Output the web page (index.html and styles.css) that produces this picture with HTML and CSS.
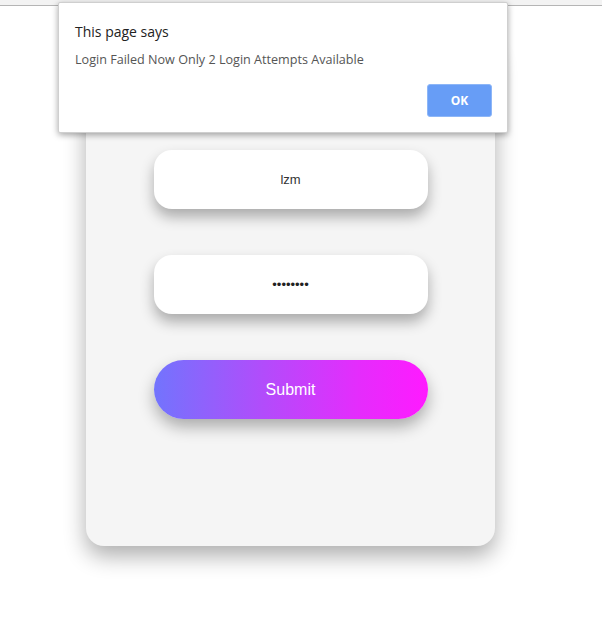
FILE: index.html
```html
<!DOCTYPE html>
<html>
<head>
<meta charset="utf-8">
<link rel="stylesheet" href="styles.css">
</head>
<body>
<div class="topbar"></div>
<main class="page">
  <form class="card">
    <div class="field">lzm</div>
    <div class="field pwd">••••••••</div>
    <div class="submit">Submit</div>
  </form>
</main>
<div class="dialog">
  <div class="d-title">This page says</div>
  <div class="d-msg">Login Failed Now Only 2 Login Attempts Available</div>
  <div class="d-actions"><div class="ok">OK</div></div>
</div>
</body>
</html>
```
FILE: styles.css
```css
html, body { margin: 0; padding: 0; background: #fff; }
body { width: 602px; height: 620px; overflow: hidden; position: relative; }
.topbar { height: 5px; background: #f3f3f3; border-bottom: 1px solid #b5b5b5; }
.page { padding: 0; }
.card {
  margin: 34px 0 0 86px;
  width: 409px;
  box-sizing: border-box;
  padding: 110px 0 127px;
  background: #f5f5f5;
  border-radius: 18px;
  box-shadow: 0 10px 22px rgba(0,0,0,0.32);
  display: flex;
  flex-direction: column;
  align-items: center;
  gap: 46px;
}
.field {
  width: 274px;
  height: 59px;
  background: #fff;
  border-radius: 18px;
  box-shadow: 0 8px 14px rgba(0,0,0,0.3);
  display: flex;
  align-items: center;
  justify-content: center;
  font-family: "Liberation Sans", Arial, sans-serif;
  font-size: 13px;
  color: #333;
}
.pwd { font-size: 13px; color: #222; }
.submit {
  width: 274px;
  height: 59px;
  border-radius: 30px;
  background: linear-gradient(90deg, #7274fd 0%, #b24cfb 40%, #e52cfc 75%, #ff1aff 100%);
  box-shadow: 0 8px 16px rgba(0,0,0,0.3);
  display: flex;
  align-items: center;
  justify-content: center;
  font-family: "Liberation Sans", Arial, sans-serif;
  font-size: 16px;
  color: #fff;
}
.dialog {
  position: absolute;
  left: 58px;
  top: 2px;
  width: 450px;
  height: 131px;
  box-sizing: border-box;
  background: #fff;
  border: 1px solid #cfcfcf;
  border-radius: 2px;
  box-shadow: 0 2px 6px rgba(0,0,0,0.35);
  padding: 20px 15px 0 16px;
  font-family: "Open Sans", "Noto Sans", sans-serif;
}
.d-title { font-size: 14px; color: #222; line-height: 18px; }
.d-msg { font-size: 12.6px; color: #555; margin-top: 11px; line-height: 16px; }
.d-actions { display: flex; justify-content: flex-end; margin-top: 16px; }
.ok {
  width: 65px;
  height: 33px;
  background: #679df6;
  border: 1px solid #8db6f7;
  box-sizing: border-box;
  border-radius: 3px;
  color: #fff;
  font-weight: bold;
  font-size: 12px;
  display: flex;
  align-items: center;
  justify-content: center;
}
```
